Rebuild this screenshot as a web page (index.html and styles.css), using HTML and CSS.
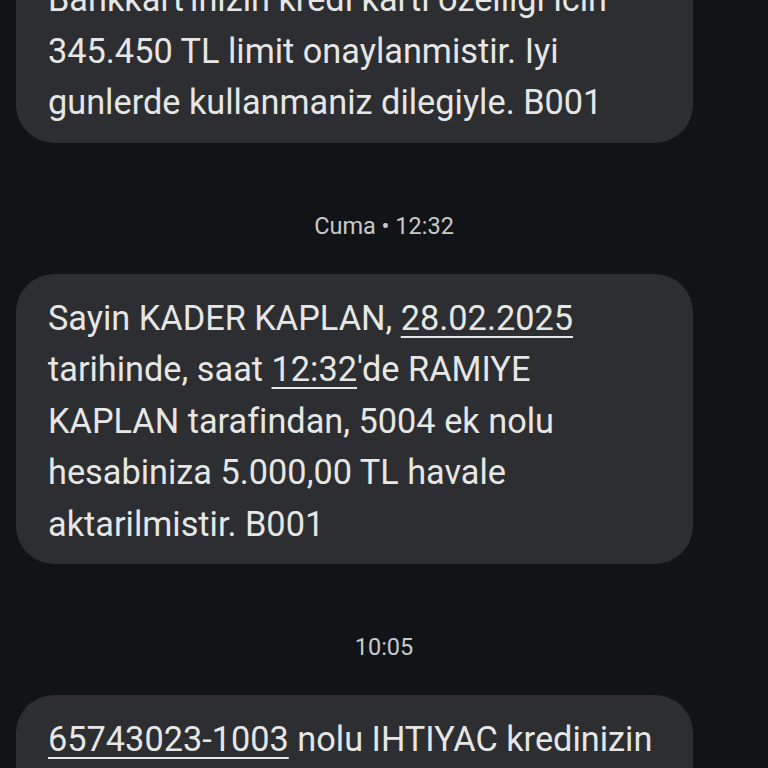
FILE: index.html
```html
<!DOCTYPE html>
<html lang="tr">
<head>
<meta charset="utf-8">
<title>Mesajlar</title>
<link rel="stylesheet" href="styles.css">
</head>
<body>
<main class="thread">
  <div class="bubble bubble-first">
    <span class="line">Bankkart'inizin kredi karti ozelligi icin</span>
    <span class="line">345.450 TL limit onaylanmistir. Iyi</span>
    <span class="line">gunlerde kullanmaniz dilegiyle. B001</span>
  </div>
  <div class="stamp">Cuma • 12:32</div>
  <div class="bubble">
    <span class="line">Sayin KADER KAPLAN, <u class="link">28.02.2025</u></span>
    <span class="line">tarihinde, saat <u class="link">12:32</u>'de RAMIYE</span>
    <span class="line">KAPLAN tarafindan, 5004 ek nolu</span>
    <span class="line">hesabiniza 5.000,00 TL havale</span>
    <span class="line">aktarilmistir. B001</span>
  </div>
  <div class="stamp">10:05</div>
  <div class="bubble bubble-last">
    <span class="line"><u class="link">65743023-1003</u> nolu IHTIYAC kredinizin</span>
  </div>
</main>
</body>
</html>
```
FILE: styles.css
```css
html, body {
  margin: 0;
  padding: 0;
  background: #111417;
  height: 768px;
  overflow: hidden;
}
.thread {
  display: flex;
  flex-direction: column;
  align-items: flex-start;
  font-family: Roboto, "Noto Sans", sans-serif;
  color: #e6e6e6;
}
.bubble {
  box-sizing: border-box;
  width: 677px;
  margin-left: 16px;
  padding: 19px 32px 14px;
  background: #2c2e31;
  border-radius: 38px;
  font-size: 34.3px;
  line-height: 51.5px;
}
.bubble-first {
  margin-top: -45px;
}
.bubble-last {
  padding-bottom: 40px;
}
.line {
  display: block;
  white-space: nowrap;
}
.link {
  text-decoration: underline;
  text-decoration-thickness: 2px;
  text-underline-offset: 6px;
}
.stamp {
  align-self: stretch;
  text-align: center;
  margin: 68px 0 33px;
  font-size: 23.5px;
  line-height: 30px;
  color: #c7c9cb;
}
```
